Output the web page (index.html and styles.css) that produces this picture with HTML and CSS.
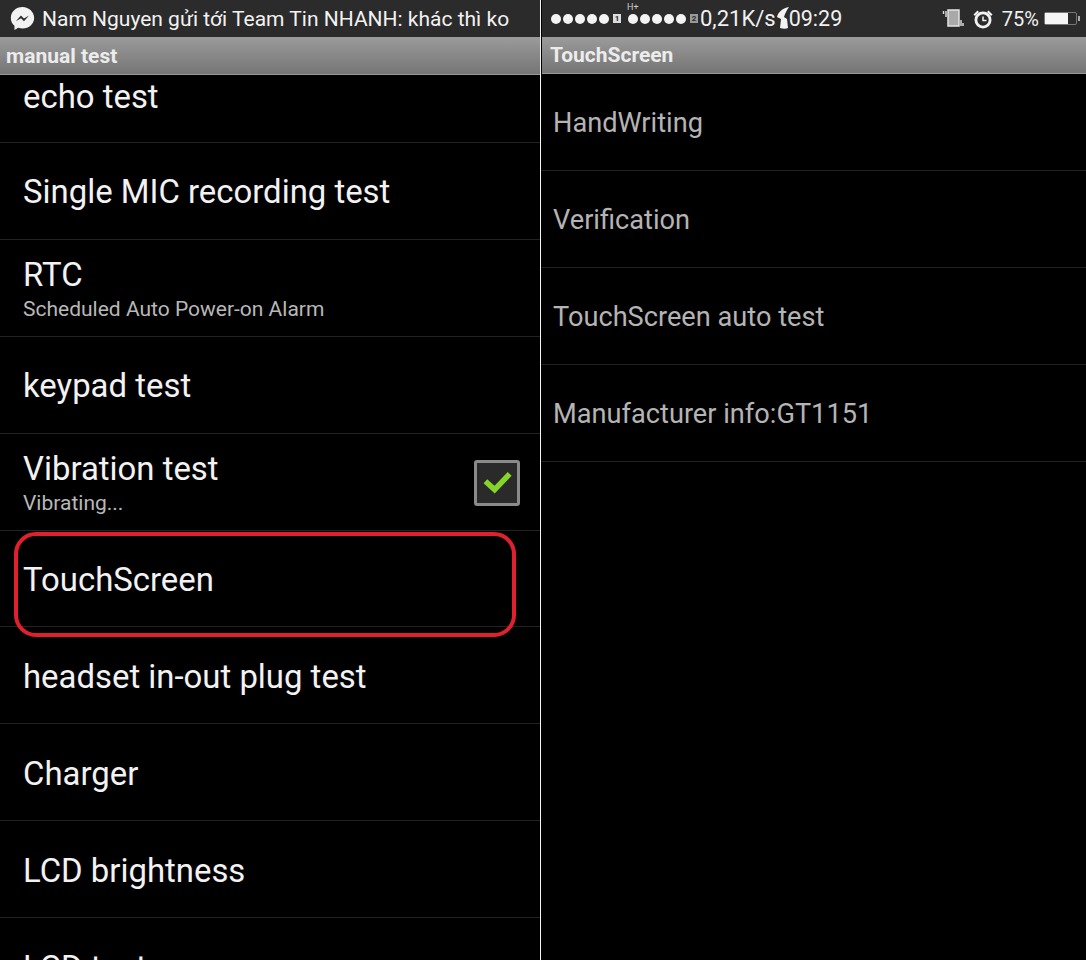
FILE: index.html
```html
<!DOCTYPE html>
<html lang="vi">
<head>
    <meta charset="UTF-8">
    <meta name="viewport" content="width=device-width, initial-scale=1.0">
    <title>manual test</title>
    <link rel="stylesheet" href="styles.css">
</head>
<body>
    <div class="screen screen-left">
        <div class="status-bar notify">
            <svg class="messenger" viewBox="0 0 24 24">
                <path fill="#f2f2f2" d="M12 1C5.700 1 .8 5.600.8 11.400c0 3 1.300 5.700 3.500 7.600V23l3.700-2.100c1.300.4 2.600.6 4 .6 6.300 0 11.200-4.600 11.200-10.100S18.300 1 12 1z"/>
                <path fill="#2b2b2b" d="M5.600 14.600l4.900-5.400 2.900 2.700 4.900-2.700-4.900 5.400-2.800-2.800z"/>
            </svg>
            <span class="notify-text">Nam Nguyen gửi tới Team Tin NHANH: khác thì ko</span>
        </div>
        <div class="title-bar">manual test</div>
        <div class="list">
            <div class="row row-cut"><div class="row-label">echo test</div></div>
            <div class="row"><div class="row-label">Single MIC recording test</div></div>
            <div class="row row-two">
                <div class="row-label">RTC</div>
                <div class="row-sub">Scheduled Auto Power-on Alarm</div>
            </div>
            <div class="row"><div class="row-label">keypad test</div></div>
            <div class="row row-two">
                <div class="row-label">Vibration test</div>
                <div class="row-sub">Vibrating...</div>
                <div class="checkbox">
                    <svg viewBox="0 0 30 30" width="36" height="36">
                        <path fill="none" stroke="#84d42a" stroke-width="4.500" stroke-linecap="square" d="M7 15l6 5.500L24 9"/>
                    </svg>
                </div>
            </div>
            <div class="row"><div class="row-label">TouchScreen</div></div>
            <div class="row"><div class="row-label">headset in-out plug test</div></div>
            <div class="row"><div class="row-label">Charger</div></div>
            <div class="row"><div class="row-label">LCD brightness</div></div>
            <div class="row"><div class="row-label">LCD test</div></div>
            <div class="red-mark"></div>
        </div>
    </div>

    <div class="divider"></div>

    <div class="screen screen-right">
        <div class="status-bar system">
            <div class="signal">
                <i></i><i></i><i></i><i></i><i></i>
                <b class="sim">1</b>
                <span class="hplus">H+</span>
                <i></i><i></i><i></i><i></i><i></i>
                <b class="sim sim-dim">2</b>
            </div>
            <span class="speed">0,21K/s</span>
            <svg class="blob" width="14" height="24" viewBox="0 0 14 24">
                <path fill="#f2f2f2" d="M13 1C7 2 2 6 1 11l4 2-1 9c3 1 6 1 8 0l-1-9-3-2c1-4 3-7 5-10z"/>
            </svg>
            <span class="clock">09:29</span>
            <div class="status-right">
                <svg class="vibrate" width="22" height="20" viewBox="0 0 22 20">
                    <rect x="6" y="1" width="11" height="16" fill="#a9a9a9" stroke="#e4e4e4" stroke-width="1.500"/>
                    <path stroke="#d8d8d8" stroke-width="1.500" d="M1.500 2v3M4 2v6M19 11v6M21 14v3"/>
                </svg>
                <svg class="alarm" width="21" height="20" viewBox="0 0 21 20">
                    <path fill="#f2f2f2" d="M1 5.500L5 1.500 6.500 3 2.500 7zM20 5.500L16 1.500 14.500 3 18.500 7z"/>
                    <circle cx="10.500" cy="11" r="8.500" fill="#f2f2f2"/>
                    <circle cx="10.500" cy="11" r="5.700" fill="#2b2b2b"/>
                    <path fill="none" stroke="#f2f2f2" stroke-width="1.500" d="M10.500 7.500V11.500H14"/>
                </svg>
                <span class="percent">75%</span>
                <div class="battery"><div class="battery-fill"></div></div>
            </div>
        </div>
        <div class="title-bar">TouchScreen</div>
        <div class="list list-dim">
            <div class="row"><div class="row-label">HandWriting</div></div>
            <div class="row"><div class="row-label">Verification</div></div>
            <div class="row"><div class="row-label">TouchScreen auto test</div></div>
            <div class="row"><div class="row-label">Manufacturer info:GT1151</div></div>
        </div>
    </div>
</body>
</html>
```

FILE: styles.css
```css
html, body {
    height: 100%;
}
body {
    margin: 0;
    background: #000;
    display: flex;
    overflow: hidden;
    font-family: Roboto, 'Liberation Sans', sans-serif;
    color: #f2f2f2;
}
.screen {
    height: 960px;
    overflow: hidden;
}
.screen-left {
    width: 540px;
}
.screen-right {
    flex: 1;
    margin-left: 1px;
}
.divider {
    width: 1px;
    background: #f4f4f4;
}
.status-bar {
    height: 37px;
    background: #2b2b2b;
    display: flex;
    align-items: center;
    box-sizing: border-box;
}
.notify {
    padding-left: 10px;
}
.messenger {
    width: 25px;
    height: 25px;
    margin-right: 7px;
}
.notify-text {
    font-size: 21px;
    white-space: nowrap;
}
.title-bar {
    height: 38px;
    box-sizing: border-box;
    padding-left: 6px;
    background: linear-gradient(#9b9b9b, #757575);
    border-bottom: 1px solid #999;
    line-height: 38px;
    font-size: 21px;
    font-weight: 700;
    color: #ececec;
}
.screen-right .title-bar {
    height: 37px;
    padding-left: 8px;
    line-height: 37px;
}
.list {
    position: relative;
}
.row {
    position: relative;
    height: 96.900px;
    box-sizing: border-box;
    padding-left: 23px;
    padding-top: 3px;
    border-bottom: 1px solid #222;
    display: flex;
    flex-direction: column;
    justify-content: center;
}
.row-cut {
    height: 68px;
    padding-top: 3px;
    justify-content: flex-start;
}
.row-two {
    padding-top: 6px;
}
.row-label {
    font-size: 32.900px;
    line-height: 38px;
    color: #f2f2f2;
}
.row-sub {
    font-size: 21px;
    line-height: 31px;
    color: #b8b8b8;
}
.list-dim .row {
    padding-left: 11px;
}
.list-dim .row-label {
    font-size: 27.200px;
    color: #b4b4b4;
}
.checkbox {
    position: absolute;
    right: 20px;
    top: 26px;
    width: 46px;
    height: 46px;
    box-sizing: border-box;
    border: 3px solid #8a8a8a;
    border-radius: 3px;
    background: #2a2a2a;
    display: flex;
    align-items: center;
    justify-content: center;
}
.red-mark {
    position: absolute;
    left: 13.500px;
    top: 457px;
    width: 502px;
    height: 105px;
    box-sizing: border-box;
    border: 4.500px solid #e1202e;
    border-radius: 22px;
}
.system {
    position: relative;
    padding: 0 9px;
}
.signal {
    position: relative;
    display: flex;
    align-items: center;
    margin-right: 2px;
}
.signal i {
    width: 10px;
    height: 10px;
    margin-right: 2px;
    border-radius: 50%;
    background: #f4f4f4;
}
.sim {
    width: 8px;
    height: 9px;
    margin: 0 7px 0 2px;
    background: #ddd;
    color: #2b2b2b;
    font-size: 8px;
    line-height: 9px;
    text-align: center;
}
.sim-dim {
    margin-right: 0;
    background: #999;
}
.hplus {
    position: absolute;
    left: 76px;
    top: -12px;
    font-size: 9px;
    color: #ccc;
}
.speed, .clock, .percent {
    font-size: 22px;
    color: #f0f0f0;
    white-space: nowrap;
}
.clock {
    font-size: 21.500px;
    margin-left: 13px;
}
.blob {
    position: absolute;
    left: 234px;
    top: 6px;
}
.status-right {
    margin-left: auto;
    display: flex;
    align-items: center;
}
.vibrate {
    margin-right: 8px;
}
.alarm {
    margin-right: 8px;
    width: 22px;
}
.percent {
    font-size: 20px;
    margin-right: 5px;
}
.battery {
    position: relative;
    width: 33px;
    height: 13px;
    box-sizing: border-box;
    border: 1px solid #777;
    border-radius: 2px;
}
.battery::after {
    content: "";
    position: absolute;
    right: -4px;
    top: 3px;
    width: 2px;
    height: 5px;
    background: #aaa;
}
.battery-fill {
    width: 75%;
    height: 100%;
    background: #f6f6f6;
}
```
